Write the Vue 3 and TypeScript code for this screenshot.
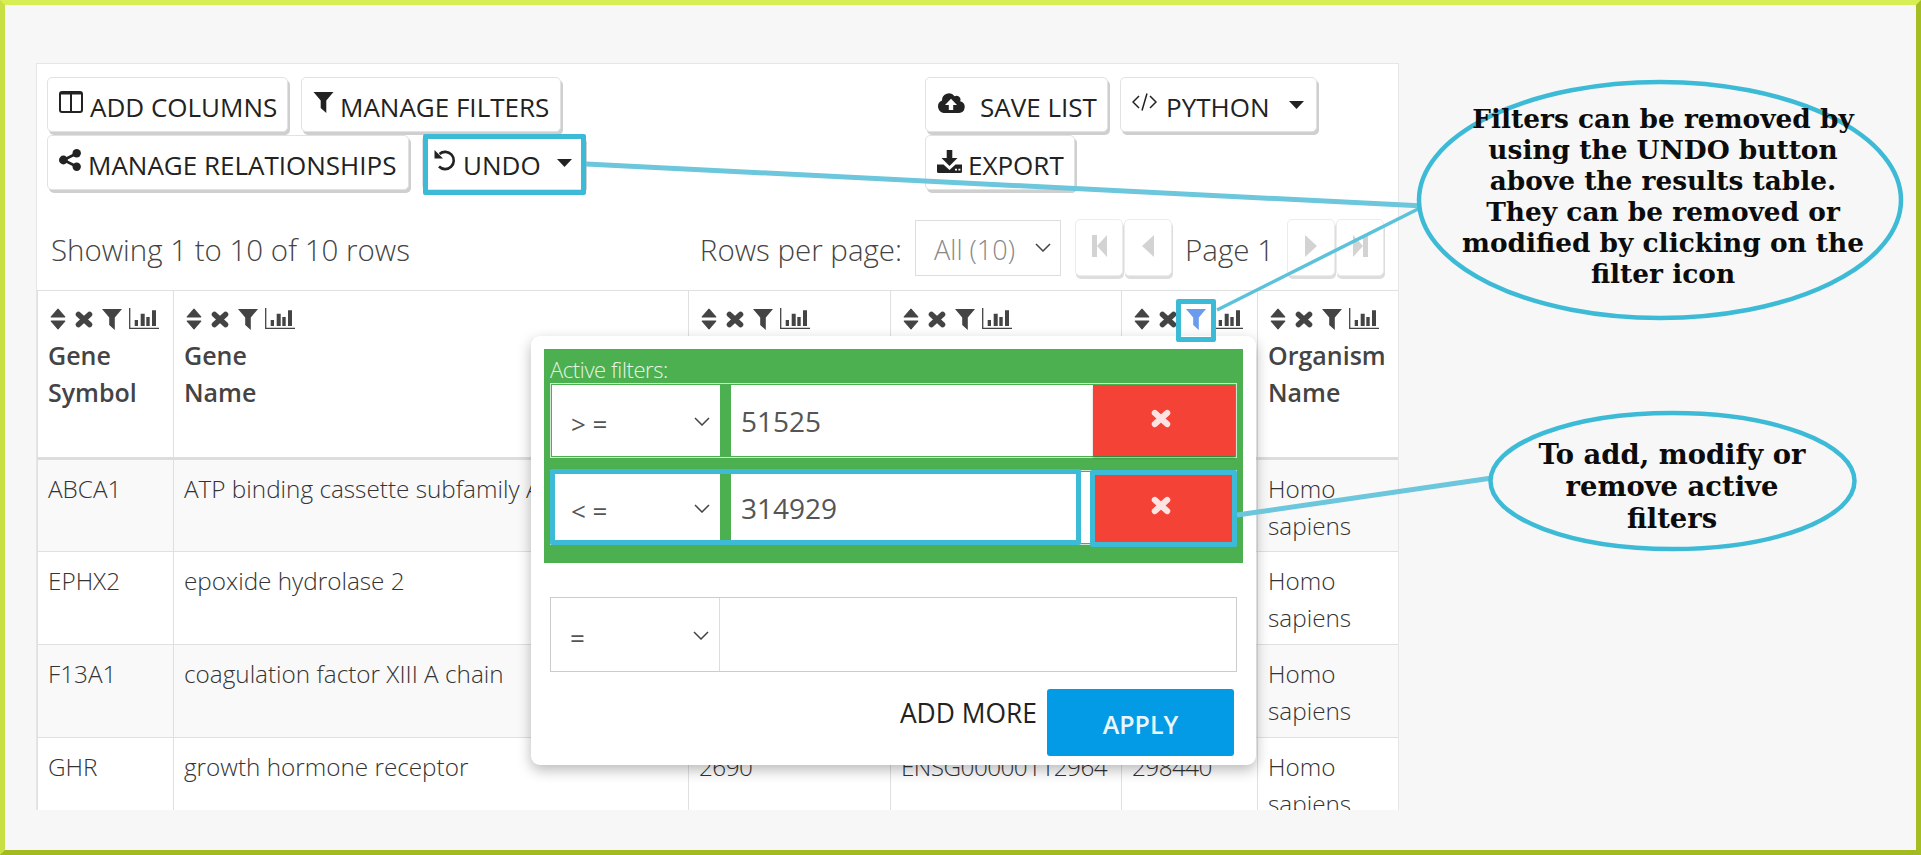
<script setup lang="ts">
interface Row { symbol: string; name: string; id: string; ens: string; len: string; org: string }
const headers: string[][] = [['Gene', 'Symbol'], ['Gene', 'Name'], [], [], [], ['Organism', 'Name']]
const rows: Row[] = [
  { symbol: 'ABCA1', name: 'ATP binding cassette subfamily A', id: '', ens: '', len: '', org: 'Homo sapiens' },
  { symbol: 'EPHX2', name: 'epoxide hydrolase 2', id: '', ens: '', len: '', org: 'Homo sapiens' },
  { symbol: 'F13A1', name: 'coagulation factor XIII A chain', id: '', ens: '', len: '', org: 'Homo sapiens' },
  { symbol: 'GHR', name: 'growth hormone receptor', id: '2690', ens: 'ENSG00000112964', len: '298440', org: 'Homo sapiens' },
]
const activeFilters = [
  { op: '> =', value: '51525' },
  { op: '< =', value: '314929' },
]
</script>

<template>
  <div class="page">
    <svg class="defs" width="0" height="0" aria-hidden="true">
      <symbol id="i-sort" viewBox="0 0 15 21"><path d="M7.5 1 14 8.5H1Z M1 12.5H14L7.5 20Z" fill="currentColor" stroke="currentColor" stroke-linejoin="round" /></symbol>
      <symbol id="i-x" viewBox="0 0 18 17"><path d="M3.5 3.5 14.5 13.5M14.5 3.5 3.5 13.5" fill="none" stroke="currentColor" stroke-width="5.6" stroke-linecap="round" /></symbol>
      <symbol id="i-filter" viewBox="0 0 20 21"><path d="M0 0H20L12.8 8.5V21L7.2 16V8.5Z" fill="currentColor" /></symbol>
      <symbol id="i-chart" viewBox="0 0 30 21">
        <path d="M.7 0V20.3H30" fill="none" stroke="currentColor" stroke-width="1.3" />
        <path d="M5.7 12H9V18H5.7ZM11.7 5.7H15.7V18H11.7ZM17.3 9H20.7V18H17.3ZM23 2.3H27V18H23Z" fill="currentColor" />
      </symbol>
      <symbol id="i-columns" viewBox="0 0 24 22"><rect x="1" y="1" width="22" height="20" rx="2" fill="none" stroke="currentColor" stroke-width="2" /><path d="M1 2.5H23M12 2V21" stroke="currentColor" stroke-width="2" /></symbol>
      <symbol id="i-share" viewBox="0 0 22 22"><path d="M17.5 4.5 4.5 11 17.5 17.5" fill="none" stroke="currentColor" stroke-width="2.6" /><circle cx="17.7" cy="4.2" r="4.2" fill="currentColor" /><circle cx="17.7" cy="17.8" r="4.2" fill="currentColor" /><circle cx="4.4" cy="11" r="4.4" fill="currentColor" /></symbol>
      <symbol id="i-undo" viewBox="0 0 22 22"><path d="M5.5 5A8.6 8.6 0 1 1 5 17.5" fill="none" stroke="currentColor" stroke-width="2.6" /><path d="M.5 1V9.5H9Z" fill="currentColor" /></symbol>
      <symbol id="i-cloud" viewBox="0 0 28 21"><path d="M23.2 9.2A4 4 0 0 0 17.6 4.2 7 7 0 0 0 5 8.6 6.5 6.5 0 0 0 6.5 21H22A6 6 0 0 0 23.2 9.2Z" fill="currentColor" /><path d="M14 6.8 20 13H16.2V18H11.8V13H8Z" fill="#fff" /></symbol>
      <symbol id="i-code" viewBox="0 0 25 18"><path d="M7 3 1 9 7 15M18 3 24 9 18 15M15 .5 10 17.5" fill="none" stroke="currentColor" stroke-width="1.5" /></symbol>
      <symbol id="i-download" viewBox="0 0 25 23"><path d="M9.7 0H15.3V8H20.5L12.5 16 4.5 8H9.7Z" fill="currentColor" /><path d="M0 14.5H6.5L12.5 20 18.5 14.5H25V21.5A1.5 1.5 0 0 1 23.5 23H1.5A1.5 1.5 0 0 1 0 21.5Z" fill="currentColor" /><path d="M18 18.8H20V20.6H18ZM21.4 18.8H23.4V20.6H21.4Z" fill="#fff" /></symbol>
      <symbol id="i-caret" viewBox="0 0 15 8"><path d="M0 0H15L7.5 8Z" fill="currentColor" /></symbol>
      <symbol id="i-chev" viewBox="0 0 16 9"><path d="M1 1 8 8 15 1" fill="none" stroke="currentColor" stroke-width="1.5" /></symbol>
      <symbol id="i-first" viewBox="0 0 15 22"><path d="M0 0H5V22H0ZM15 0V22L5 11Z" fill="currentColor" /></symbol>
      <symbol id="i-prev" viewBox="0 0 12 22"><path d="M12 0V22L0 11Z" fill="currentColor" /></symbol>
      <symbol id="i-next" viewBox="0 0 12 22"><path d="M0 0V22L12 11Z" fill="currentColor" /></symbol>
      <symbol id="i-last" viewBox="0 0 15 22"><path d="M10 0H15V22H10ZM0 0V22L10 11Z" fill="currentColor" /></symbol>
    </svg>

    <section class="card">
      <div class="toolbar">
        <div class="tool-group left">
          <button class="btn b-add"><svg class="ic ic-columns"><use href="#i-columns" /></svg>ADD COLUMNS</button>
          <button class="btn b-filters"><svg class="ic ic-funnel"><use href="#i-filter" /></svg>MANAGE FILTERS</button>
          <button class="btn b-rel"><svg class="ic ic-share"><use href="#i-share" /></svg>MANAGE RELATIONSHIPS</button>
          <button class="btn b-undo"><svg class="ic ic-undo"><use href="#i-undo" /></svg>UNDO<svg class="caret"><use href="#i-caret" /></svg></button>
        </div>
        <div class="tool-group right">
          <button class="btn b-save"><svg class="ic ic-cloud"><use href="#i-cloud" /></svg>SAVE LIST</button>
          <button class="btn b-python"><svg class="ic ic-code"><use href="#i-code" /></svg>PYTHON<svg class="caret"><use href="#i-caret" /></svg></button>
          <button class="btn b-export"><svg class="ic ic-dl"><use href="#i-download" /></svg>EXPORT</button>
        </div>
      </div>

      <div class="pagination">
        <span class="showing">Showing 1 to 10 of 10 rows</span>
        <div class="pager">
          <span class="per-page">Rows per page:</span>
          <div class="page-select"><span>All (10)</span><svg class="chev"><use href="#i-chev" /></svg></div>
          <button class="pg pg-first"><svg class="pg-w15"><use href="#i-first" /></svg></button>
          <button class="pg"><svg class="pg-w12"><use href="#i-prev" /></svg></button>
          <span class="page-no">Page 1</span>
          <button class="pg"><svg class="pg-w12"><use href="#i-next" /></svg></button>
          <button class="pg pg-last"><svg class="pg-w15"><use href="#i-last" /></svg></button>
        </div>
      </div>

      <table class="grid">
        <colgroup>
          <col class="c1" /><col class="c2" /><col class="c3" /><col class="c4" /><col class="c5" /><col class="c6" />
        </colgroup>
        <thead>
          <tr>
            <th v-for="(h, i) in headers" :key="i">
              <div class="th-icons">
                <svg class="h-sort"><use href="#i-sort" /></svg>
                <svg class="h-x"><use href="#i-x" /></svg>
                <svg class="h-filter" :class="{ active: i === 4 }"><use href="#i-filter" /></svg>
                <svg class="h-chart"><use href="#i-chart" /></svg>
              </div>
              <div v-for="w in h" :key="w" class="th-word">{{ w }}</div>
            </th>
          </tr>
        </thead>
        <tbody>
          <tr v-for="r in rows" :key="r.symbol">
            <td>{{ r.symbol }}</td>
            <td>{{ r.name }}</td>
            <td class="num">{{ r.id }}</td>
            <td class="num">{{ r.ens }}</td>
            <td class="num">{{ r.len }}</td>
            <td>{{ r.org }}</td>
          </tr>
        </tbody>
      </table>

      <div class="popup">
        <div class="active-panel">
          <div class="active-title">Active filters:</div>
          <div v-for="f in activeFilters" :key="f.op" class="filter-row">
            <div class="op"><span>{{ f.op }}</span><svg class="chev"><use href="#i-chev" /></svg></div>
            <div class="val">{{ f.value }}</div>
            <div class="remove"><svg class="rm-x"><use href="#i-x" /></svg></div>
          </div>
        </div>
        <div class="new-row">
          <div class="op op-new"><span>=</span><svg class="chev"><use href="#i-chev" /></svg></div>
          <div class="val-new"></div>
        </div>
        <div class="popup-foot">
          <span class="add-more">ADD MORE</span>
          <button class="apply">APPLY</button>
        </div>
      </div>
    </section>

    <div class="overlay">
      <svg class="lines" width="1921" height="855">
        <line x1="586" y1="164" x2="1424" y2="206" stroke="#6cc6dc" stroke-width="5" />
        <line x1="1217" y1="310" x2="1424" y2="206" stroke="#5cc2da" stroke-width="3.5" />
        <line x1="1237" y1="515" x2="1492" y2="478" stroke="#6cc6dc" stroke-width="5" />
        <ellipse cx="1660" cy="200" rx="241" ry="118" fill="#f7f7f7" stroke="#3dbbd6" stroke-width="4.5" />
        <ellipse cx="1672.5" cy="481" rx="182" ry="68" fill="#f7f7f7" stroke="#3dbbd6" stroke-width="4.5" />
      </svg>
      <div class="hl hl-undo"></div>
      <div class="hl hl-funnel"></div>
      <div class="hl hl-row"></div>
      <div class="hl hl-remove"></div>
      <div class="note note-a">Filters can be removed by<br />using the UNDO button<br />above the results table.<br />They can be removed or<br />modified by clicking on the<br />filter icon</div>
      <div class="note note-b">To add, modify or<br />remove active<br />filters</div>
    </div>
  </div>
</template>

<style>
html, body { margin: 0; padding: 0; background: #f7f7f7; }
</style>

<style scoped>
.page {
  position: relative;
  box-sizing: border-box;
  width: 1921px;
  height: 855px;
  overflow: hidden;
  padding: 58px 0 0 31px;
  background: #f7f7f7;
  border: 5px solid;
  border-color: #d8ee55 #a5bd20 #a3bb1f #c9e045;
  font-family: "Open Sans", "Liberation Sans", sans-serif;
  color: #444;
}
.defs { position: absolute; }
svg { display: block; flex: none; }

.card {
  position: relative;
  box-sizing: border-box;
  width: 1363px;
  height: 747px;
  overflow: hidden;
  background: #fff;
  border: 1px solid #e6e6e6;
  border-bottom: 0;
}

.toolbar { display: flex; padding: 13px 0 0 10px; height: 116px; box-sizing: content-box; }
.tool-group { display: flex; flex-wrap: wrap; align-content: flex-start; column-gap: 13px; row-gap: 3px; }
.tool-group.left { width: 878px; }
.tool-group.right { width: 420px; column-gap: 12px; }
.btn {
  display: flex;
  align-items: center;
  box-sizing: border-box;
  height: 55px;
  padding: 4px 0 0 11px;
  background: #fff;
  border: 1px solid #e2e2e2;
  border-radius: 5px;
  box-shadow: 2px 3px 0 #cfcfcf;
  font: 400 26px "Open Sans", sans-serif;
  color: #222;
  white-space: nowrap;
}
.b-add { width: 241px; }
.b-filters { width: 260px; }
.b-rel { width: 362px; }
.b-undo { width: 163px; }
.b-save { width: 183px; }
.b-python { width: 197px; }
.b-export { width: 150px; }
.ic { color: #222; margin-top: -9px; }
.ic-columns { width: 24px; height: 22px; margin-right: 7px; }
.ic-funnel { width: 21px; height: 21px; margin-right: 6px; }
.ic-share { width: 22px; height: 22px; margin-right: 7px; }
.ic-undo { width: 22px; height: 22px; margin-right: 7px; }
.ic-cloud { width: 28px; height: 21px; margin-right: 15px; }
.ic-code { width: 25px; height: 18px; margin-right: 9px; }
.ic-dl { width: 25px; height: 23px; margin-right: 6px; margin-top: -7px; }
.caret { width: 15px; height: 8px; margin: -3px 12px 0 auto; color: #222; }

.pagination {
  display: flex;
  align-items: center;
  justify-content: space-between;
  height: 60px;
  margin-top: 25px;
  padding: 0 13px 0 14px;
}
.showing, .per-page, .page-no { font-size: 29.5px; font-weight: 300; color: #444; margin-top: 2px; }
.pager { display: flex; align-items: center; }
.per-page { margin-right: 13px; }
.page-select {
  display: flex;
  align-items: center;
  justify-content: space-between;
  box-sizing: border-box;
  width: 146px;
  height: 56px;
  padding: 3px 9px 0 18px;
  border: 1.5px solid #ddd;
  margin-right: 14px;
  font-size: 27px;
  font-weight: 300;
  color: #888;
}
.chev { width: 16px; height: 9px; color: #444; margin-top: -4px; }
.pg {
  display: flex;
  align-items: center;
  justify-content: center;
  box-sizing: border-box;
  width: 48px;
  height: 57px;
  margin-right: 1px;
  margin-bottom: 2px;
  padding: 0 0 2px;
  background: #fff;
  border: 1px solid #ececec;
  border-radius: 5px;
  box-shadow: 1px 3px 0 #ddd;
  color: #d3d3d3;
}
.pg-w15 { width: 15px; height: 22px; }
.pg-w12 { width: 12px; height: 22px; }
.page-no { margin-left: 12px; margin-right: 13px; }

.grid { table-layout: fixed; width: 1361px; margin-top: 12px; border-collapse: collapse; }
.c1 { width: 136px; } .c2 { width: 515px; } .c3 { width: 202px; }
.c4 { width: 231px; } .c5 { width: 136px; } .c6 { width: 141px; }
.grid th, .grid td { border: 1px solid #e0e0e0; text-align: left; vertical-align: top; padding: 0 10px; }
.grid th { height: 168px; border-bottom: 3px solid #ddd; padding-top: 17px; box-sizing: border-box; font-weight: 600; overflow: hidden; }
.grid td { height: 93px; box-sizing: border-box; padding-top: 10px; font-size: 24.3px; font-weight: 300; line-height: 37px; color: #333; }
.grid td.num { letter-spacing: -.55px; white-space: nowrap; }
.grid tbody tr:nth-child(odd) td { background: #f9f9f9; }
.th-icons { display: flex; align-items: flex-start; color: #444; padding-left: 2px; margin-bottom: 7px; height: 22px; }
.h-sort { width: 16px; height: 22px; margin-right: 9px; }
.h-x { width: 18px; height: 17px; margin: 3px 9px 0 0; }
.h-filter { width: 20px; height: 21px; margin: 1px 7px 0 0; }
.h-filter.active { color: #6a9bef; }
.h-chart { width: 30px; height: 21px; }
.th-word { font-size: 25px; line-height: 37px; color: #444; }

.popup {
  position: absolute;
  left: 494px;
  top: 272px;
  box-sizing: border-box;
  width: 725px;
  height: 429px;
  padding: 13px;
  background: #fff;
  border-radius: 9px;
  box-shadow: 0 5px 14px rgba(0, 0, 0, .28);
}
.active-panel { box-sizing: border-box; height: 214px; padding: 0 6px; background: #4caf50; }
.active-title { height: 34px; font-size: 22px; letter-spacing: -.4px; font-weight: 300; line-height: 40px; color: #e6f4e6; }
.filter-row {
  display: flex;
  box-sizing: border-box;
  height: 75px;
  margin-bottom: 12px;
  padding: 1px;
  border: 1px solid #cfe8d0;
}
.filter-row .op { background: #fff; }
.op {
  display: flex;
  align-items: center;
  justify-content: space-between;
  box-sizing: border-box;
  width: 168px;
  padding: 6px 10px 0 19px;
  font-size: 26px;
  font-weight: 400;
  color: #555;
}
.val {
  flex: 1;
  margin-left: 11px;
  background: #fff;
  padding-left: 10px;
  font-size: 28px;
  font-weight: 400;
  line-height: 73px;
  height: 71px;
  color: #555;
}
.remove { display: flex; align-items: center; justify-content: center; width: 142px; background: #f44336; box-shadow: 0 2px 2px rgba(0, 0, 0, .25); }
.rm-x { width: 20px; height: 19px; color: #fde4e2; margin: -5px 0 0 -7px; }
.new-row { display: flex; box-sizing: border-box; height: 75px; margin: 34px 6px 0; border: 1px solid #ccc; }
.op-new { border-right: 1px solid #ddd; width: 169px; }
.val-new { flex: 1; }
.popup-foot { display: flex; justify-content: flex-end; align-items: flex-start; margin: 17px 9px 0 0; }
.add-more { font-size: 26.4px; font-weight: 400; color: #222; margin: 6px 10px 0 0; }
.apply {
  width: 187px;
  height: 67px;
  padding-top: 3px;
  border: 0;
  border-radius: 3px;
  background: #039be5;
  color: #eaf6fd;
  font: 600 25px "Open Sans", sans-serif;
}

.overlay { position: absolute; left: -5px; top: -5px; width: 1921px; height: 855px; pointer-events: none; }
.lines { position: absolute; left: 0; top: 0; }
.hl { position: absolute; box-sizing: border-box; border: 5px solid #3dbbd6; border-radius: 2px; }
.hl-undo { left: 423px; top: 134px; width: 163px; height: 61px; }
.hl-funnel { left: 1176px; top: 299px; width: 40px; height: 43px; }
.hl-row { left: 550px; top: 469px; width: 531px; height: 76px; }
.hl-remove { left: 1090px; top: 470px; width: 147px; height: 77px; }
.note {
  position: absolute;
  font-family: "DejaVu Serif", serif;
  font-weight: 700;
  color: #0c0c0c;
  text-align: center;
  white-space: nowrap;
}
.note-a { left: 1413px; top: 103px; width: 500px; font-size: 26.4px; line-height: 31px; }
.note-b { left: 1472px; top: 438px; width: 400px; font-size: 27.4px; line-height: 32px; }
</style>
